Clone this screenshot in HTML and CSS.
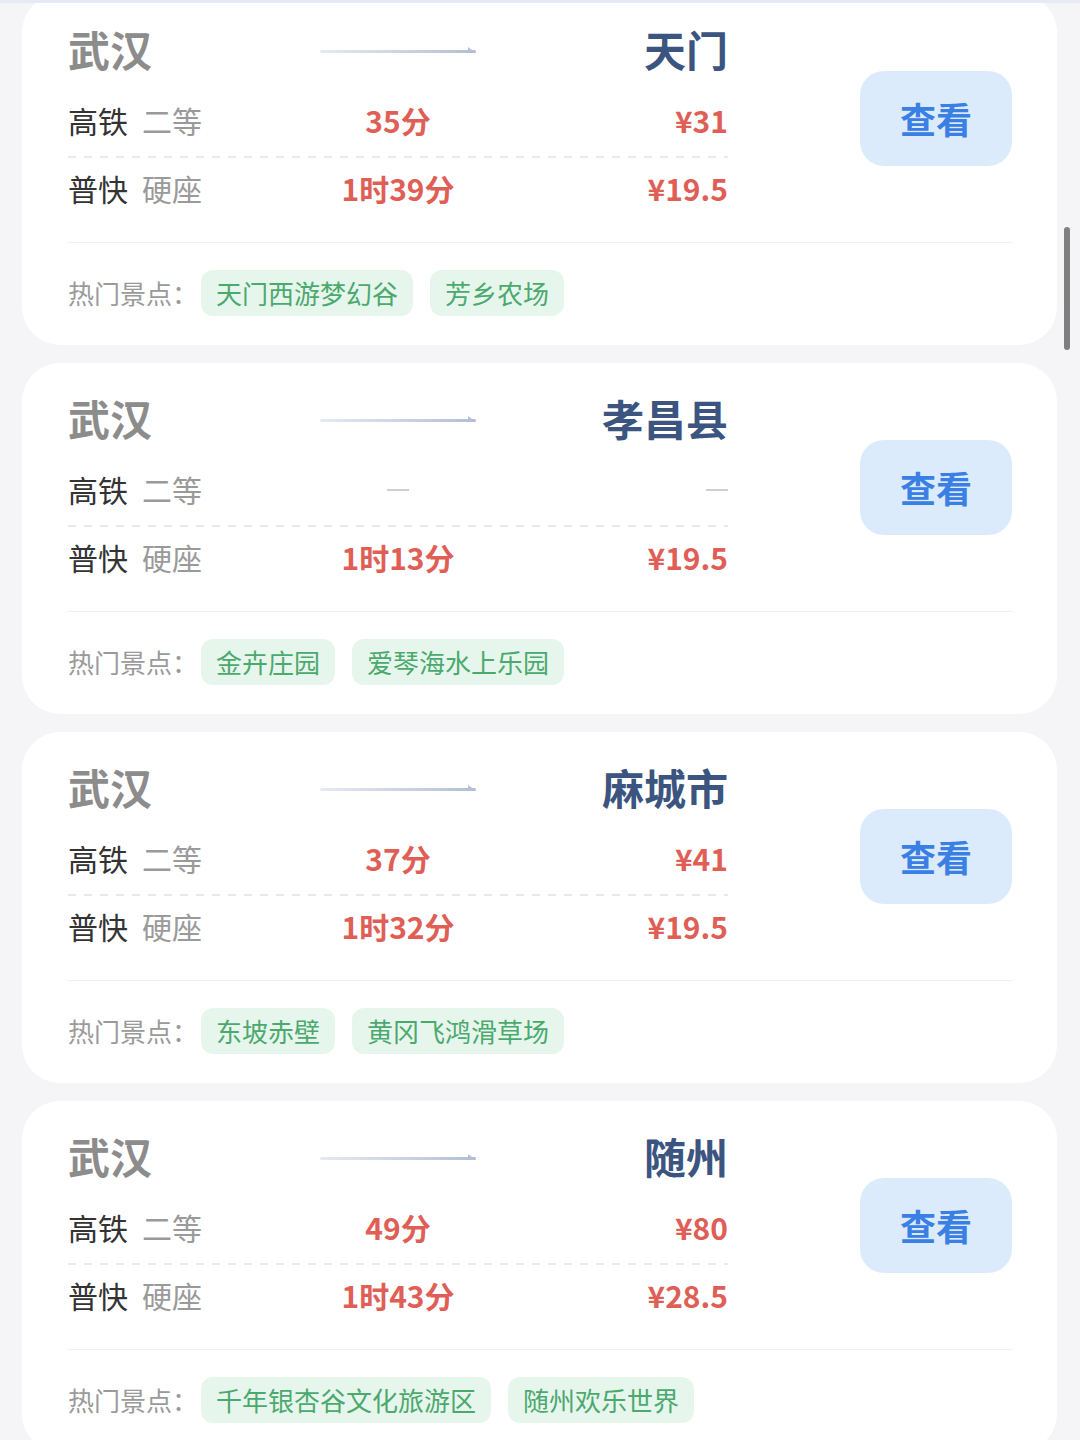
FILE: index.html
```html
<!DOCTYPE html>
<html lang="zh-CN">
<head>
  <meta charset="UTF-8" />
  <meta name="viewport" content="width=device-width, initial-scale=1" />
  <title>周边游 - 从武汉出发</title>
  <link rel="stylesheet" href="styles.css">
</head>
<body>
  <div class="top-edge"></div>
  <div class="scroll-thumb"></div>

  <div class="list">
    <div class="card">
      <div class="card-top">
        <div class="route">
          <div class="route-head">
            <span class="from">武汉</span>
            <svg class="arrow" width="156" height="10" viewBox="0 0 156 10"><defs><linearGradient id="g1" x1="0" x2="1"><stop offset="0" stop-color="#e6e9f1"/><stop offset="1" stop-color="#b4bed4"/></linearGradient></defs><rect x="0" y="6" width="156" height="3" rx="1.5" fill="url(#g1)"/><path d="M148 9 L148 3 L156 9 Z" fill="#b4bed4"/></svg>
            <span class="to">天门</span>
          </div>
          <div class="seat-row">
            <span class="train">高铁<em>二等</em></span>
            <span class="time">35分</span>
            <span class="price">¥31</span>
          </div>
          <div class="dash"></div>
          <div class="seat-row last">
            <span class="train">普快<em>硬座</em></span>
            <span class="time">1时39分</span>
            <span class="price">¥19.5</span>
          </div>
        </div>
        <button class="view-btn">查看</button>
      </div>
      <div class="spots">
        <span class="spots-label">热门景点：</span>
        <span class="tag">天门西游梦幻谷</span>
        <span class="tag">芳乡农场</span>
      </div>
    </div>

    <div class="card">
      <div class="card-top">
        <div class="route">
          <div class="route-head">
            <span class="from">武汉</span>
            <svg class="arrow" width="156" height="10" viewBox="0 0 156 10"><defs><linearGradient id="g2" x1="0" x2="1"><stop offset="0" stop-color="#e6e9f1"/><stop offset="1" stop-color="#b4bed4"/></linearGradient></defs><rect x="0" y="6" width="156" height="3" rx="1.5" fill="url(#g2)"/><path d="M148 9 L148 3 L156 9 Z" fill="#b4bed4"/></svg>
            <span class="to">孝昌县</span>
          </div>
          <div class="seat-row">
            <span class="train">高铁<em>二等</em></span>
            <span class="time"><i class="none"></i></span>
            <span class="price"><i class="none"></i></span>
          </div>
          <div class="dash"></div>
          <div class="seat-row last">
            <span class="train">普快<em>硬座</em></span>
            <span class="time">1时13分</span>
            <span class="price">¥19.5</span>
          </div>
        </div>
        <button class="view-btn">查看</button>
      </div>
      <div class="spots">
        <span class="spots-label">热门景点：</span>
        <span class="tag">金卉庄园</span>
        <span class="tag">爱琴海水上乐园</span>
      </div>
    </div>

    <div class="card">
      <div class="card-top">
        <div class="route">
          <div class="route-head">
            <span class="from">武汉</span>
            <svg class="arrow" width="156" height="10" viewBox="0 0 156 10"><defs><linearGradient id="g3" x1="0" x2="1"><stop offset="0" stop-color="#e6e9f1"/><stop offset="1" stop-color="#b4bed4"/></linearGradient></defs><rect x="0" y="6" width="156" height="3" rx="1.5" fill="url(#g3)"/><path d="M148 9 L148 3 L156 9 Z" fill="#b4bed4"/></svg>
            <span class="to">麻城市</span>
          </div>
          <div class="seat-row">
            <span class="train">高铁<em>二等</em></span>
            <span class="time">37分</span>
            <span class="price">¥41</span>
          </div>
          <div class="dash"></div>
          <div class="seat-row last">
            <span class="train">普快<em>硬座</em></span>
            <span class="time">1时32分</span>
            <span class="price">¥19.5</span>
          </div>
        </div>
        <button class="view-btn">查看</button>
      </div>
      <div class="spots">
        <span class="spots-label">热门景点：</span>
        <span class="tag">东坡赤壁</span>
        <span class="tag">黄冈飞鸿滑草场</span>
      </div>
    </div>

    <div class="card">
      <div class="card-top">
        <div class="route">
          <div class="route-head">
            <span class="from">武汉</span>
            <svg class="arrow" width="156" height="10" viewBox="0 0 156 10"><defs><linearGradient id="g4" x1="0" x2="1"><stop offset="0" stop-color="#e6e9f1"/><stop offset="1" stop-color="#b4bed4"/></linearGradient></defs><rect x="0" y="6" width="156" height="3" rx="1.5" fill="url(#g4)"/><path d="M148 9 L148 3 L156 9 Z" fill="#b4bed4"/></svg>
            <span class="to">随州</span>
          </div>
          <div class="seat-row">
            <span class="train">高铁<em>二等</em></span>
            <span class="time">49分</span>
            <span class="price">¥80</span>
          </div>
          <div class="dash"></div>
          <div class="seat-row last">
            <span class="train">普快<em>硬座</em></span>
            <span class="time">1时43分</span>
            <span class="price">¥28.5</span>
          </div>
        </div>
        <button class="view-btn">查看</button>
      </div>
      <div class="spots">
        <span class="spots-label">热门景点：</span>
        <span class="tag">千年银杏谷文化旅游区</span>
        <span class="tag">随州欢乐世界</span>
      </div>
    </div>
  </div>
</body>
</html>
```

FILE: styles.css
```css
* {
  box-sizing: border-box;
}

body {
  margin: 0;
  background: #f5f5f7;
  font-family: "Noto Sans CJK SC", "Noto Sans", sans-serif;
  color: #333;
}

.top-edge {
  position: fixed;
  top: 0;
  left: 0;
  right: 0;
  height: 3px;
  background: #e5eaf5;
  z-index: 2;
}

.scroll-thumb {
  position: fixed;
  top: 227px;
  right: 10px;
  width: 6px;
  height: 123px;
  border-radius: 3px;
  background: #7f7f7f;
  z-index: 2;
}

.list {
  display: flex;
  flex-direction: column;
  gap: 18px;
  margin-top: -6px;
  padding: 0 23px 0 22px;
}

.card {
  background: #fff;
  border-radius: 38px;
  padding: 0 45px 0 46px;
  height: 351px;
}

.card-top {
  display: flex;
  align-items: center;
  height: 249px;
  border-bottom: 1px solid #f1f1f3;
}

.route {
  width: 660px;
  padding-top: 20px;
  padding-bottom: 25px;
}

.route-head,
.seat-row {
  display: grid;
  grid-template-columns: 220px 220px 220px;
  align-items: center;
}

.route-head {
  height: 70px;
  font-size: 42px;
  font-weight: 700;
}

.from {
  color: #8c8c8c;
}

.arrow {
  justify-self: center;
}

.to {
  color: #3b5480;
  text-align: right;
}

.seat-row {
  height: 72px;
  font-size: 30px;
}

.seat-row.last {
  height: 60px;
}

.train {
  color: #333;
}

.train em {
  font-style: normal;
  color: #9a9a9a;
  margin-left: 14px;
}

.time,
.price {
  color: #df5f57;
  font-weight: 700;
}

.time {
  text-align: center;
}

.price {
  text-align: right;
}

.none {
  display: inline-block;
  width: 22px;
  height: 2px;
  background: #cfcfcf;
  vertical-align: 11px;
}

.dash {
  height: 2px;
  background: repeating-linear-gradient(90deg, #e9e9ec 0 8px, transparent 8px 16px);
}

.view-btn {
  margin-left: auto;
  width: 152px;
  height: 95px;
  border: none;
  border-radius: 24px;
  background: #dcebfc;
  color: #3a80e4;
  font-family: inherit;
  font-size: 36px;
  font-weight: 700;
  cursor: pointer;
}

.spots {
  display: flex;
  align-items: center;
  height: 101px;
  padding-bottom: 2px;
}

.spots-label {
  font-size: 26px;
  color: #9a9a9a;
  margin-right: 3px;
}

.tag {
  height: 46px;
  line-height: 46px;
  padding: 0 15px;
  margin-right: 17px;
  border-radius: 12px;
  background: #e7f6ed;
  color: #4ba96d;
  font-size: 26px;
}
```
